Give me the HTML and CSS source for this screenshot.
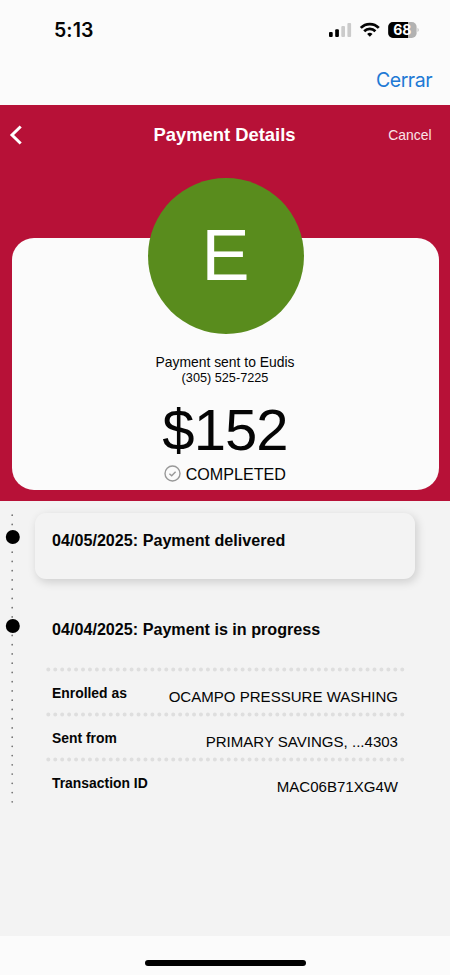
FILE: index.html
```html
<!DOCTYPE html>
<html lang="en">
<head>
<meta charset="utf-8">
<title>Payment Details</title>
<link rel="stylesheet" href="styles.css">
</head>
<body>
<div class="screen">
  <div class="status">
    <span class="time">5:13</span>
    <svg class="indicators" width="92" height="20" viewBox="0 0 92 20">
      <rect x="1" y="12" width="3.7" height="5" rx="1"/>
      <rect x="7.2" y="9.2" width="3.7" height="7.8" rx="1"/>
      <rect class="off" x="13.3" y="6" width="3.7" height="11" rx="1"/>
      <rect class="off" x="19.4" y="3" width="3.7" height="14" rx="1"/>
      <g class="waves">
        <path d="M32.8 7.900a12.500 12.500 0 0 1 18 0"/>
        <path d="M36.200 11.300a7.800 7.800 0 0 1 11.200 0"/>
      </g>
      <path d="M41.800 16.700l-2.700-2.700a3.800 3.800 0 0 1 5.400 0z"/>
      <rect class="rest" x="60.200" y="2" width="28.400" height="16" rx="4.800"/>
      <path d="M65 2H80v16H65a4.800 4.800 0 0 1-4.800-4.800V6.800A4.800 4.800 0 0 1 65 2z"/>
      <path class="rest" d="M89.600 7.800q2 2.200 0 4.400z"/>
      <text x="74.300" y="15" text-anchor="middle">68</text>
    </svg>
  </div>
  <div class="sheet-bar"><a class="close">Cerrar</a></div>
  <section class="hero">
    <header class="nav">
      <svg class="back" width="14" height="22" viewBox="0 0 14 22"><path d="M11.700 2.500L3 11l8.700 8.500"/></svg>
      <h1>Payment Details</h1>
      <a class="cancel">Cancel</a>
    </header>
    <div class="card">
      <div class="avatar">E</div>
      <p class="sent">Payment sent to Eudis</p>
      <p class="phone">(305) 525-7225</p>
      <p class="amount">$152</p>
      <p class="state">
        <svg width="17" height="17" viewBox="0 0 17 17"><circle cx="8.500" cy="8.500" r="7.500"/><path d="M5.400 8.700l2.300 2.100 3.900-4"/></svg>
        <span>COMPLETED</span>
      </p>
    </div>
  </section>
  <main class="history">
    <svg class="rail" width="26" height="303" viewBox="0 0 26 303">
      <path d="M12.200 14.200V301.500"/>
      <circle cx="12.800" cy="36" r="7"/>
      <circle cx="12.800" cy="125" r="7"/>
    </svg>
    <div class="events">
      <div class="event delivered">04/05/2025: Payment delivered</div>
      <div class="event progress">04/04/2025: Payment is in progress</div>
      <dl class="details">
        <div class="row"><svg class="dots" width="359" height="5"><path d="M2.300 2.500H357"/></svg><dt>Enrolled as</dt><dd>OCAMPO PRESSURE WASHING</dd></div>
        <div class="row"><svg class="dots" width="359" height="5"><path d="M2.300 2.500H357"/></svg><dt>Sent from</dt><dd>PRIMARY SAVINGS, ...4303</dd></div>
        <div class="row"><svg class="dots" width="359" height="5"><path d="M2.300 2.500H357"/></svg><dt>Transaction ID</dt><dd>MAC06B71XG4W</dd></div>
      </dl>
    </div>
  </main>
  <footer class="home"><div class="handle"></div></footer>
</div>
</body>
</html>
```
FILE: styles.css
```css
* { box-sizing: border-box; }
body, h1, p, dl, dd { margin: 0; }
body {
  background: #fbfbfb;
  color: #050505;
  font-family: "Liberation Sans", Arial, sans-serif;
}
.screen {
  width: 450px;
  height: 975px;
  display: flex;
  flex-direction: column;
  overflow: hidden;
}
.status {
  height: 60px;
  padding: 20px 30px 0 54px;
  display: flex;
  justify-content: space-between;
  align-items: flex-start;
}
.time {
  font: 600 19.500px/21px Inter, sans-serif;
  letter-spacing: 0.100px;
}
.indicators { display: block; }
.indicators .off { fill: #cbcbcb; }
.indicators .rest { fill: #b2b2b2; }
.indicators .waves { fill: none; stroke: #050505; stroke-width: 2.700; }
.indicators text {
  fill: #fff;
  font: 700 14px Inter, sans-serif;
}
.sheet-bar {
  height: 45.400px;
  padding: 8px 18px 0 0;
  text-align: right;
}
.close {
  color: #2079d5;
  font: 400 19.500px/24px Inter, sans-serif;
  letter-spacing: -0.500px;
}
.hero {
  height: 396px;
  padding: 0 11.500px;
  background: #b71137;
}
.nav {
  height: 132.600px;
  padding-top: 14.600px;
  display: grid;
  grid-template-columns: 60px 1fr 60px;
  align-items: start;
  color: #fff;
}
.back {
  margin: 4px 0 0 -2.500px;
  fill: none;
  stroke: #fff;
  stroke-width: 3;
}
.nav h1 {
  font-size: 18.400px;
  line-height: 30px;
  text-align: center;
  margin-left: -1px;
}
.cancel {
  padding-right: 7px;
  font-size: 13.900px;
  line-height: 30px;
  text-align: right;
  color: #fbe3e9;
}
.card {
  height: 252px;
  border-radius: 22px;
  background: #fbfbfb;
  display: flex;
  flex-direction: column;
  align-items: center;
}
.avatar {
  flex: none;
  width: 156px;
  height: 156px;
  margin: -60px 0 20px 1px;
  border-radius: 50%;
  background: #598c1d;
  color: #fff;
  font-size: 72px;
  line-height: 155px;
  text-align: center;
}
.sent { font-size: 13.900px; line-height: 16px; }
.phone { font-size: 12.700px; line-height: 16px; }
.amount {
  margin-top: 12px;
  font-size: 58px;
  line-height: 64px;
  letter-spacing: -0.900px;
}
.state {
  display: flex;
  align-items: center;
  gap: 4.500px;
  margin-top: 2px;
  font-size: 16.100px;
  line-height: 20px;
}
.state svg { fill: none; stroke: #999; stroke-width: 1.400; }
.history {
  flex: 1;
  display: flex;
  background: #f3f3f3;
}
.rail { flex: none; fill: #000; }
.rail path {
  fill: none;
  stroke: #777;
  stroke-width: 1.800;
  stroke-linecap: round;
  stroke-dasharray: 0 9.247;
}
.events { flex: 1; padding: 12px 35px 0 8.500px; }
.event {
  padding-left: 17.500px;
  font-size: 16.150px;
  font-weight: 700;
  line-height: 20px;
}
.delivered {
  height: 65.500px;
  padding-top: 16.500px;
  border-radius: 11px;
  background: #f3f3f3;
  box-shadow: 2px 3px 10px rgba(0, 0, 0, 0.16);
}
.progress { height: 88px; padding-top: 40px; }
.details { padding-left: 11.500px; }
.row {
  height: 45px;
  display: grid;
  grid-template-columns: auto 1fr;
  grid-template-rows: 5px 1fr;
  white-space: nowrap;
}
.dots {
  grid-column: 1 / -1;
  width: 359px;
  display: block;
}
.dots path {
  fill: none;
  stroke: #dedede;
  stroke-width: 4;
  stroke-linecap: round;
  stroke-dasharray: 0 6.940;
}
dt {
  padding: 11px 0 0 6px;
  font-size: 13.900px;
  font-weight: 700;
  line-height: 20px;
}
dd {
  padding: 15.500px 17px 0 0;
  font-size: 15.050px;
  line-height: 20px;
  text-align: right;
}
.home {
  height: 39px;
  padding-top: 23.500px;
}
.handle {
  width: 161px;
  height: 6px;
  margin: 0 auto;
  border-radius: 3px;
  background: #000;
}
```
